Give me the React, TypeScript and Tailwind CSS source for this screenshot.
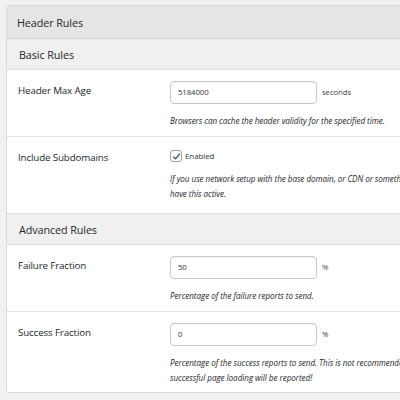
import React from "react";

const font = { fontFamily: '"Open Sans", "Noto Sans", sans-serif' };

function Label({ children }: { children: React.ReactNode }) {
  return (
    <div className="w-[163px] shrink-0 pl-[11px] pt-[14px] text-[9.8px] leading-[13px] tracking-[-0.15px] text-[#23282d]">
      {children}
    </div>
  );
}

function Row({ label, children, h }: { label: string; children: React.ReactNode; h: string }) {
  return (
    <div className={`flex border-b border-[#e2e2e2] bg-white ${h}`}>
      <Label>{label}</Label>
      <div className="flex-1 pt-[11px]">{children}</div>
    </div>
  );
}

function Input({ value, unit }: { value: string; unit: string }) {
  return (
    <div className="flex items-center gap-[5px]">
      <div className="flex h-[23px] w-[147px] items-center rounded-[4px] border border-[#c8c8c8] bg-white pl-[7px] text-[7.8px] tracking-[-0.1px] text-[#32373c] shadow-[inset_0_1px_1px_rgba(0,0,0,0.05)]">
        {value}
      </div>
      <span className="text-[7.8px] tracking-[-0.1px] text-[#444]">{unit}</span>
    </div>
  );
}

function Desc({ children }: { children: React.ReactNode }) {
  return (
    <p className="mt-[9px] whitespace-nowrap text-[8.1px] italic leading-[15px] tracking-[-0.05px] text-[#23282d]">
      {children}
    </p>
  );
}

function Section({ title }: { title: string }) {
  return (
    <div className="flex h-[31px] items-center border-b border-[#e2e2e2] bg-[#f0f0f0] pl-[12px] pt-[2px] text-[10.8px] tracking-[-0.1px] text-[#23282d]">
      {title}
    </div>
  );
}

export default function App() {
  return (
    <div className="h-[400px] w-[400px] overflow-hidden bg-[#f1f1f1] pl-[6px] pt-[5px]" style={font}>
      <div className="w-[420px] overflow-hidden rounded-[3px] border border-[#d9d9d9] bg-white">
        <div className="flex h-[33px] items-center border-b border-[#d5d5d5] bg-[#e5e5e5] pl-[10px] pt-[3px] text-[10.8px] tracking-[-0.1px] text-[#23282d]">
          Header Rules
        </div>
        <Section title="Basic Rules" />
        <Row label="Header Max Age" h="h-[67px]">
          <Input value="5184000" unit="seconds" />
          <Desc>Browsers can cache the header validity for the specified time.</Desc>
        </Row>
        <Row label="Include Subdomains" h="h-[77px]">
          <div className="flex items-center gap-[3px] pt-[2px]">
            <div className="flex h-[12px] w-[12px] items-center justify-center rounded-[3px] border border-[#a0a0a0] bg-white">
              <svg width="9" height="9" viewBox="0 0 10 10">
                <path d="M1.5 5.2 L4 7.6 L8.6 2" fill="none" stroke="#2a5a8a" strokeWidth="1.5" />
              </svg>
            </div>
            <span className="text-[8px] tracking-[-0.1px] text-[#32373c]">Enabled</span>
          </div>
          <Desc>
            If you use network setup with the base domain, or CDN or something similar, you should
            <br />
            have this active.
          </Desc>
        </Row>
        <Section title="Advanced Rules" />
        <Row label="Failure Fraction" h="h-[67px]">
          <Input value="50" unit="%" />
          <Desc>Percentage of the failure reports to send.</Desc>
        </Row>
        <div className="flex h-[80px] bg-white">
          <Label>Success Fraction</Label>
          <div className="flex-1 pt-[11px]">
            <Input value="0" unit="%" />
            <Desc>
              Percentage of the success reports to send. This is not recommended as every
              <br />
              successful page loading will be reported!
            </Desc>
          </div>
        </div>
      </div>
    </div>
  );
}
